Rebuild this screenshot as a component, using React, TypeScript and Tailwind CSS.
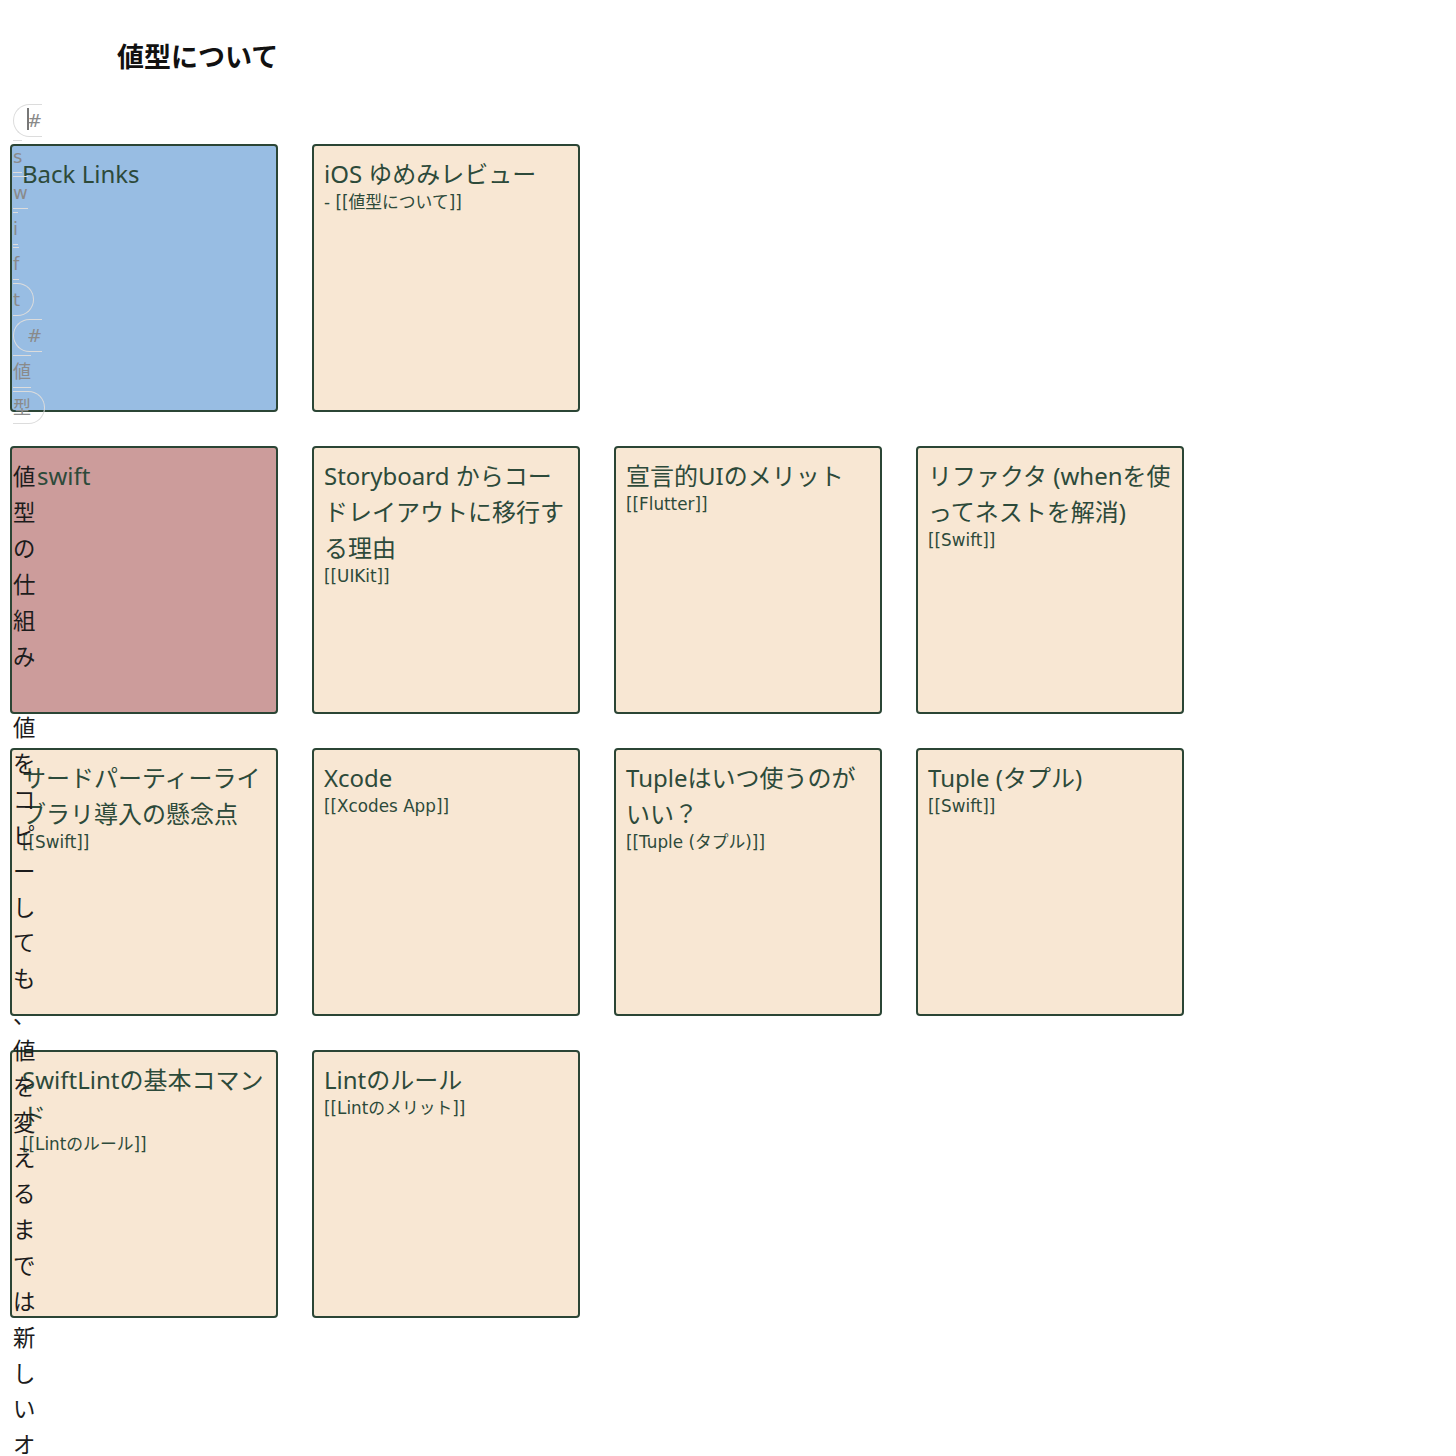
import React from 'react'

type Card = {
  title: string
  sub?: string
  tone?: 'blue' | 'pink' | 'beige'
}

const cards: Card[] = [
  { title: 'Back Links', tone: 'blue' },
  { title: 'iOS ゆめみレビュー', sub: '- [[値型について]]' },
  { title: 'swift', tone: 'pink' },
  { title: 'Storyboard からコードレイアウトに移行する理由', sub: '[[UIKit]]' },
  { title: '宣言的UIのメリット', sub: '[[Flutter]]' },
  { title: 'リファクタ (whenを使ってネストを解消)', sub: '[[Swift]]' },
  { title: 'サードパーティーライブラリ導入の懸念点', sub: '[[Swift]]' },
  { title: 'Xcode', sub: '[[Xcodes App]]' },
  { title: 'Tupleはいつ使うのがいい？', sub: '[[Tuple (タプル)]]' },
  { title: 'Tuple (タプル)', sub: '[[Swift]]' },
  { title: 'SwiftLintの基本コマンド', sub: '[[Lintのルール]]' },
  { title: 'Lintのルール', sub: '[[Lintのメリット]]' },
]

const toneClass = {
  blue: 'bg-[#98bde3]',
  pink: 'bg-[#cc9c9b]',
  beige: 'bg-[#f8e7d3]',
}

function Tag({ label }: { label: string }) {
  return (
    <span className="border border-[#dcdcdc] rounded-full px-[13px] py-[5px] text-[18px] text-[#8a8a8a] font-['DejaVu_Sans','Noto_Sans_CJK_JP',sans-serif]">
      {label}
    </span>
  )
}

function PageCard({ card }: { card: Card }) {
  const tone = card.tone ?? 'beige'
  return (
    <div
      className={`h-[268px] rounded-[4px] border-2 border-[#2b4535] pl-[10px] pr-[6px] pt-[10px] text-[#2d4a3a] overflow-hidden ${toneClass[tone]}`}
    >
      <div
        className={`text-[24px] leading-[36px] font-['Noto_Sans','Noto_Sans_CJK_JP',sans-serif] ${tone === 'pink' ? 'pl-[15px]' : ''}`}
      >
        {card.title}
      </div>
      {card.sub && <div className="text-[16.8px] leading-[20px]">{card.sub}</div>}
    </div>
  )
}

export default function App() {
  return (
    <div className="min-h-screen bg-white font-['DejaVu_Sans','Noto_Sans_CJK_JP',sans-serif]">
      <div className="h-[100px] pt-[38px] pl-[117px]">
        <h1 className="text-[27px] leading-[36px] font-bold text-[#111] font-['Noto_Sans_CJK_JP',sans-serif]">
          値型について
        </h1>
      </div>

      {/* page body, squeezed to zero width */}
      <div className="relative h-[44px] w-0 ml-[13px] text-[22.4px] leading-[1.6] text-[#1c1c1c] break-all [line-break:anywhere] font-['Noto_Sans_CJK_JP',sans-serif]">
        <span className="absolute left-[14px] top-[8px] w-[2px] h-[22px] bg-[#777]" />
        <div>
          <Tag label="#swift" /> <Tag label="#値型" />
        </div>
        <div className="h-[1.6em]" />
        <div>値型の仕組み</div>
        <div className="h-[1.6em]" />
        <div>値をコピーしても、値を変えるまでは新しいオブジェクトは作られない。</div>
      </div>

      <div className="ml-[10px] grid grid-cols-[repeat(4,268px)] gap-[34px]">
        {cards.map((c, i) => (
          <React.Fragment key={i}>
            <PageCard card={c} />
            {i === 1 && (
              <>
                <div />
                <div />
              </>
            )}
          </React.Fragment>
        ))}
      </div>
    </div>
  )
}
